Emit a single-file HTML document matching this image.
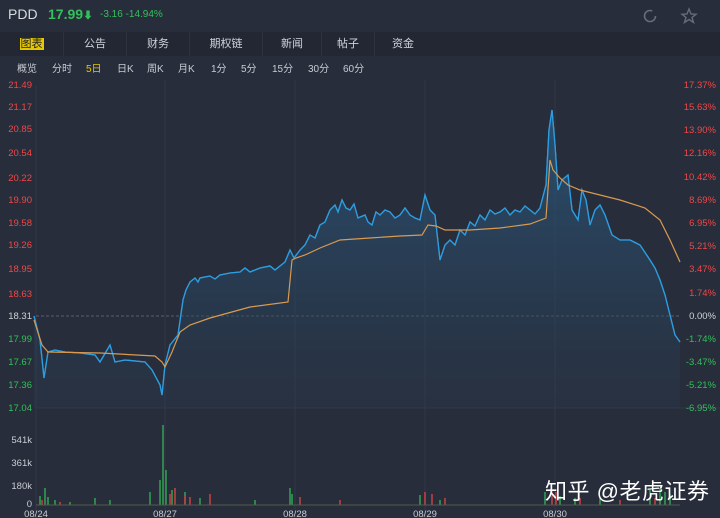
<!DOCTYPE html>
<html><head><meta charset="utf-8"><style>
body{margin:0;width:720px;height:518px;background:#272d3a;overflow:hidden;font-family:"Liberation Sans","Noto Sans CJK SC",sans-serif;position:relative}
.t{position:absolute;white-space:nowrap}
.tabs{position:absolute;left:0;top:32px;width:720px;height:24px;background:#222733}
.tab{position:absolute;top:0;height:24px;line-height:24px;font-size:11px;color:#d0d3da;text-align:center;border-right:1px solid #2c3240}
.sub{position:absolute;top:60px;font-size:10px;color:#c8ccd4}
</style></head><body>
<div class="t" style="left:8px;top:6px;font-size:14px;color:#d8dbe0">PDD</div>
<div class="t" style="left:48px;top:6px;font-size:14px;font-weight:bold;color:#33c05a">17.99<span style="font-size:10px">⬇</span></div>
<div class="t" style="left:100px;top:9px;font-size:10px;color:#33c05a">-3.16 -14.94%</div>
<svg style="position:absolute;left:640px;top:6px" width="60" height="20"><circle cx="10" cy="10" r="5.5" fill="none" stroke="#666c7a" stroke-width="1.6" stroke-dasharray="28 8"/><polygon points="49,3 51,8 56,8.3 52,11.5 53.5,16.5 49,13.5 44.5,16.5 46,11.5 42,8.3 47,8" fill="none" stroke="#666c7a" stroke-width="1.4"/></svg>
<div class="tabs">
<div class="tab" style="left:0;width:63px"><span style="background:#e6c800;color:#222;padding:0 1px">图表</span></div>
<div class="tab" style="left:64px;width:62px">公告</div>
<div class="tab" style="left:127px;width:62px">财务</div>
<div class="tab" style="left:190px;width:72px">期权链</div>
<div class="tab" style="left:263px;width:58px">新闻</div>
<div class="tab" style="left:322px;width:52px">帖子</div>
<div class="tab" style="left:375px;width:56px;border:none">资金</div>
</div>
<div class="sub" style="left:17px">概览</div><div class="sub" style="left:52px">分时</div><div class="sub" style="left:86px;color:#e6c800">5日</div><div class="sub" style="left:117px">日K</div><div class="sub" style="left:147px">周K</div><div class="sub" style="left:178px">月K</div><div class="sub" style="left:211px">1分</div><div class="sub" style="left:241px">5分</div><div class="sub" style="left:272px">15分</div><div class="sub" style="left:308px">30分</div><div class="sub" style="left:343px">60分</div>
<svg style="position:absolute;left:0;top:0" width="720" height="518" font-family="Liberation Sans" font-size="9.5">
<defs><linearGradient id="g" x1="0" y1="0" x2="0" y2="1"><stop offset="0" stop-color="#2a5a80" stop-opacity=".8"/><stop offset="1" stop-color="#2a3a50" stop-opacity=".3"/></linearGradient></defs>
<g stroke="#323846" stroke-width="1">
<line x1="36" y1="85" x2="36" y2="518"/><line x1="165" y1="80" x2="165" y2="518"/><line x1="295" y1="80" x2="295" y2="518"/><line x1="425" y1="80" x2="425" y2="518"/><line x1="555" y1="80" x2="555" y2="518"/>
<line x1="36" y1="408" x2="720" y2="408"/>
</g>
<line x1="36" y1="316" x2="680" y2="316" stroke="#5a6070" stroke-dasharray="3 2"/>
<path id="p" d="M34,316 L40,340 L44,378 L48,352 L55,350 L65,352 L80,353 L95,355 L100,362 L110,345 L115,362 L125,360 L145,362 L152,370 L160,385 L162,395 L165,365 L170,345 L178,335 L183,300 L186,290 L190,282 L195,278 L198,282 L200,278 L210,276 L215,279 L220,275 L230,273 L240,272 L245,268 L250,272 L260,268 L270,266 L275,270 L285,262 L290,250 L294,258 L300,250 L305,245 L310,235 L315,238 L320,225 L325,222 L330,210 L335,205 L338,212 L342,200 L346,208 L350,210 L354,204 L358,218 L365,215 L368,222 L372,225 L376,212 L380,215 L385,210 L390,212 L395,218 L400,215 L405,208 L410,215 L415,218 L420,220 L425,195 L430,210 L435,215 L440,260 L445,245 L450,240 L455,245 L460,230 L465,235 L470,222 L475,226 L480,215 L485,220 L490,210 L495,214 L500,212 L505,208 L510,215 L515,210 L520,212 L525,206 L530,210 L535,214 L540,208 L546,185 L549,130 L552,110 L555,145 L558,190 L562,180 L568,175 L572,210 L578,220 L582,190 L586,200 L590,225 L595,210 L600,205 L605,215 L612,235 L620,240 L630,240 L640,245 L650,260 L655,268 L660,280 L665,295 L670,315 L675,335 L680,342"
 fill="none" stroke="#2d9de0" stroke-width="1.3"/>
<path d="M34,316 L40,340 L44,378 L48,352 L55,350 L65,352 L80,353 L95,355 L100,362 L110,345 L115,362 L125,360 L145,362 L152,370 L160,385 L162,395 L165,365 L170,345 L178,335 L183,300 L186,290 L190,282 L195,278 L198,282 L200,278 L210,276 L215,279 L220,275 L230,273 L240,272 L245,268 L250,272 L260,268 L270,266 L275,270 L285,262 L290,250 L294,258 L300,250 L305,245 L310,235 L315,238 L320,225 L325,222 L330,210 L335,205 L338,212 L342,200 L346,208 L350,210 L354,204 L358,218 L365,215 L368,222 L372,225 L376,212 L380,215 L385,210 L390,212 L395,218 L400,215 L405,208 L410,215 L415,218 L420,220 L425,195 L430,210 L435,215 L440,260 L445,245 L450,240 L455,245 L460,230 L465,235 L470,222 L475,226 L480,215 L485,220 L490,210 L495,214 L500,212 L505,208 L510,215 L515,210 L520,212 L525,206 L530,210 L535,214 L540,208 L546,185 L549,130 L552,110 L555,145 L558,190 L562,180 L568,175 L572,210 L578,220 L582,190 L586,200 L590,225 L595,210 L600,205 L605,215 L612,235 L620,240 L630,240 L640,245 L650,260 L655,268 L660,280 L665,295 L670,315 L675,335 L680,342 L680,408 L34,408 Z" fill="url(#g)"/>
<use href="#p"/>
<path d="M34,320 L42,345 L48,352 L100,353 L155,356 L162,362 L165,367 L172,352 L180,332 L190,325 L210,318 L250,307 L288,302 L292,260 L296,258 L305,255 L320,248 L340,240 L370,238 L400,236 L422,235 L428,225 L436,226 L445,230 L470,230 L500,228 L530,224 L546,218 L550,160 L553,170 L560,178 L568,185 L580,190 L600,195 L620,200 L645,208 L660,220 L670,240 L680,262" fill="none" stroke="#d99a50" stroke-width="1.2"/>
<g fill="#f04848" text-anchor="end">
<text x="32" y="88">21.49</text><text x="32" y="110">21.17</text><text x="32" y="132">20.85</text><text x="32" y="156">20.54</text><text x="32" y="181">20.22</text><text x="32" y="203">19.90</text><text x="32" y="226">19.58</text><text x="32" y="248">19.26</text><text x="32" y="272">18.95</text><text x="32" y="297">18.63</text>
<text x="716" y="88">17.37%</text><text x="716" y="110">15.63%</text><text x="716" y="133">13.90%</text><text x="716" y="156">12.16%</text><text x="716" y="180">10.42%</text><text x="716" y="203">8.69%</text><text x="716" y="226">6.95%</text><text x="716" y="249">5.21%</text><text x="716" y="272">3.47%</text><text x="716" y="296">1.74%</text></g>
<text x="32" y="319" fill="#d0d3da" text-anchor="end">18.31</text><text x="716" y="319" fill="#d0d3da" text-anchor="end">0.00%</text>
<g fill="#33c05a" text-anchor="end"><text x="32" y="342">17.99</text><text x="32" y="365">17.67</text><text x="32" y="388">17.36</text><text x="32" y="411">17.04</text>
<text x="716" y="342">-1.74%</text><text x="716" y="365">-3.47%</text><text x="716" y="388">-5.21%</text><text x="716" y="411">-6.95%</text></g>
<g fill="#c8ccd4" text-anchor="end"><text x="32" y="443">541k</text><text x="32" y="466">361k</text><text x="32" y="489">180k</text><text x="32" y="507">0</text></g>
<g fill="#c8ccd4" text-anchor="middle"><text x="36" y="517">08/24</text><text x="165" y="517">08/27</text><text x="295" y="517">08/28</text><text x="425" y="517">08/29</text><text x="555" y="517">08/30</text></g>
<g stroke-width="1.2">
<path d="M40,505V496M45,505V488M48,505V497M55,505V500M70,505V502M95,505V498M110,505V500M150,505V492M160,505V480M163,505V425M166,505V470M172,505V490M185,505V492M200,505V498M255,505V500M290,505V488M292,505V494M420,505V495M440,505V500M545,505V492M560,505V496M575,505V498M600,505V497M650,505V490M660,505V488M665,505V492M670,505V494" stroke="#33c05a"/>
<path d="M42,505V500M60,505V502M170,505V494M175,505V488M185,505V496M190,505V497M210,505V494M300,505V497M340,505V500M425,505V492M432,505V494M445,505V498M552,505V490M556,505V492M580,505V498M620,505V500M655,505V498" stroke="#f04848"/>
<path d="M36,505H680" stroke="#555a4a" stroke-width="1"/>
</g>
</svg>
<div class="t" style="left:545px;top:474px;font-size:22px;color:#ffffff;letter-spacing:0.5px">知乎 @老虎证券</div>
</body></html>
